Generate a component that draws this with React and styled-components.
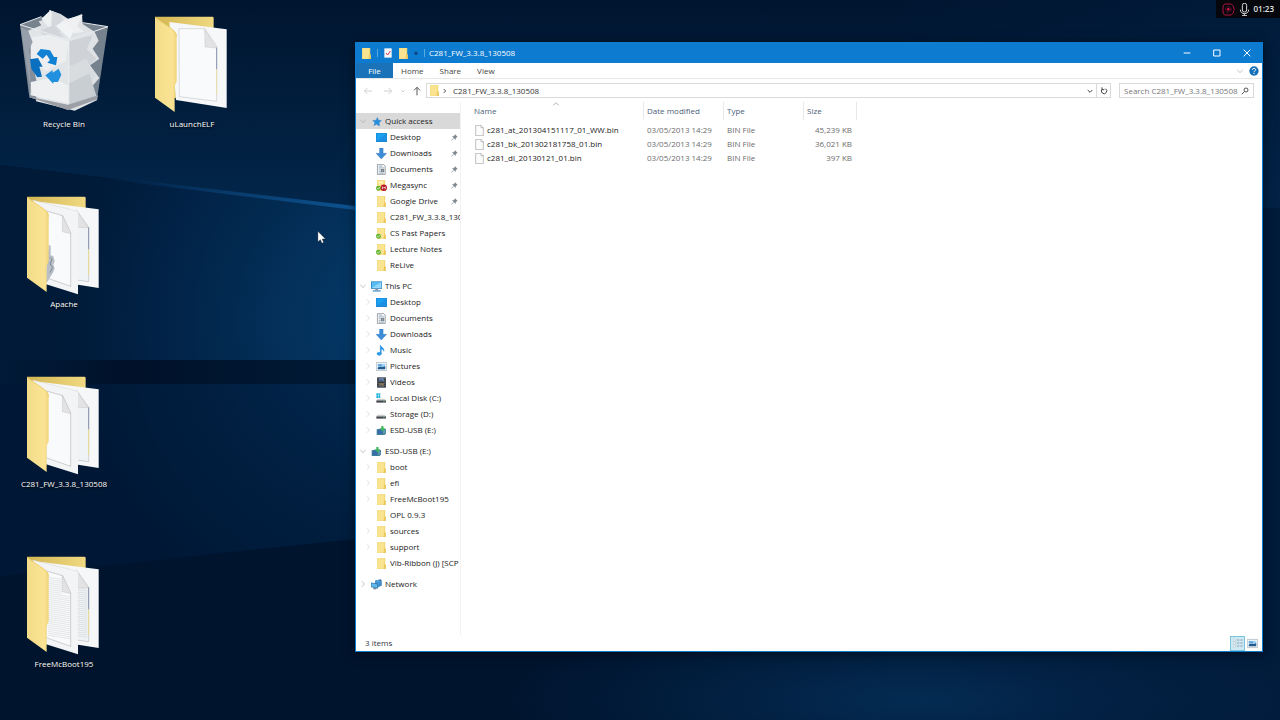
import React from "react";
import styled, { createGlobalStyle } from "styled-components";

const quickAccess = [
    { name: "Desktop", icon: "desktop", pinned: true },
    { name: "Downloads", icon: "downloads", pinned: true },
    { name: "Documents", icon: "documents", pinned: true },
    { name: "Megasync", icon: "mega", pinned: true },
    { name: "Google Drive", icon: "folder", pinned: true },
    { name: "C281_FW_3.3.8_130508", icon: "folder" },
    { name: "CS Past Papers", icon: "synced" },
    { name: "Lecture Notes", icon: "synced" },
    { name: "ReLive", icon: "folder" },
];

const thisPc = [
    { name: "Desktop", icon: "desktop", arrow: true },
    { name: "Documents", icon: "documents", arrow: true },
    { name: "Downloads", icon: "downloads", arrow: true },
    { name: "Music", icon: "music", arrow: true },
    { name: "Pictures", icon: "pictures", arrow: true },
    { name: "Videos", icon: "videos", arrow: true },
    { name: "Local Disk (C:)", icon: "systemDisk", arrow: true },
    { name: "Storage (D:)", icon: "disk", arrow: true },
    { name: "ESD-USB (E:)", icon: "usb", arrow: true },
];

const usb = [
    { name: "boot", icon: "folder", arrow: true },
    { name: "efi", icon: "folder", arrow: true },
    { name: "FreeMcBoot195", icon: "folder", arrow: true },
    { name: "OPL 0.9.3", icon: "folder" },
    { name: "sources", icon: "folder", arrow: true },
    { name: "support", icon: "folder", arrow: true },
    { name: "Vib-Ribbon (J) [SCP", icon: "folder" },
];

const groups = [
    { name: "Quick access", icon: "star", open: true, active: true, items: quickAccess },
    { name: "This PC", icon: "pc", open: true, items: thisPc },
    { name: "ESD-USB (E:)", icon: "usb", open: true, items: usb },
    { name: "Network", icon: "network", items: [] },
];

const files = [
    { name: "c281_at_201304151117_01_WW.bin", date: "03/05/2013 14:29", type: "BIN File", size: "45,239 KB" },
    { name: "c281_bk_201302181758_01.bin", date: "03/05/2013 14:29", type: "BIN File", size: "36,021 KB" },
    { name: "c281_dl_20130121_01.bin", date: "03/05/2013 14:29", type: "BIN File", size: "397 KB" },
];

const shortcuts = [
    { name: "Recycle Bin", kind: "bin" },
    { name: "Apache", kind: "feather" },
    { name: "C281_FW_3.3.8_130508", kind: "plain" },
    { name: "FreeMcBoot195", kind: "lines" },
    { name: "uLaunchELF", kind: "single" },
];

/* ---------- drawings ---------- */

const FolderShape = () => (
    <>
        <path d="M3 0h23v18l2 2v11H3z" fill="#f3d672" />
        <path d="M4 1h19v29H4z" fill="#fbe491" />
        <path d="M23 18h4v12h-6z" fill="#e9c75a" />
    </>
);

const UsbShape = () => (
    <>
        <path d="M2 12l16-3 10 2v14l-4 3H2z" fill="#3f7f96" />
        <path d="M4 15h14v10H4z" fill="#3a6cb0" />
        <path d="M20 13l6-1v11l-6 3z" fill="#5f9bb0" />
        <path d="M11 10h4V3h6v7h5l-7 8z" fill="#3cb85a" />
    </>
);

const DiskShape = () => (
    <>
        <path d="M4 16h20l4 5H1z" fill="#c9cdd0" />
        <path d="M1 21h27v6H1z" fill="#3c4247" />
        <path d="M20 23h5v2h-5z" fill="#6fdc6a" />
    </>
);

const icons = {
    folder: <FolderShape />,
    synced: (
        <>
            <FolderShape />
            <circle cx="7" cy="23" r="7" fill="#63b22f" />
            <path d="M3 23l3 3 5-6" fill="none" stroke="#fff" strokeWidth="2" />
        </>
    ),
    mega: (
        <>
            <FolderShape />
            <path d="M7 5h12v4H7z" fill="#fff6cf" />
            <circle cx="7" cy="23" r="7" fill="#63b22f" />
            <path d="M3 23l3 3 5-6" fill="none" stroke="#fff" strokeWidth="2" />
            <circle cx="22" cy="22" r="9" fill="#b81a22" />
            <path d="M18 26v-7l4 4 4-4v7" fill="none" stroke="#fff" strokeWidth="2" />
        </>
    ),
    desktop: (
        <>
            <path d="M0 3h31v25H0z" fill="#1274c4" />
            <path d="M1 4h29v22H1z" fill="#1ba1f2" />
            <path d="M1 26L30 4v22z" fill="#1b8fe2" />
        </>
    ),
    downloads: <path d="M10 0h10v15h10L15 31 0 15h10z" fill="#3b8bd6" stroke="#2b73b8" />,
    documents: (
        <>
            <path d="M4 1h17l5 5v24H4z" fill="#f2f3f4" stroke="#7d858c" strokeWidth="2" />
            <path d="M8 6h9M8 11h14M8 16h5M8 21h5M8 26h14" stroke="#7e97ad" strokeWidth="2" />
            <path d="M14 14h9v9h-9z" fill="#6c7780" />
            <path d="M16 17h5M16 20h5" stroke="#fff" />
        </>
    ),
    music: (
        <>
            <path d="M12 0c2 7 13 8 10 18-1-5-4-7-7-7v14h-3V0z" fill="#1c86dc" stroke="#1c86dc" />
            <ellipse cx="9" cy="25" rx="7" ry="5" fill="#2f9be8" />
        </>
    ),
    pictures: (
        <>
            <path d="M1 4h29v23H1z" fill="#f5f8fa" stroke="#a9b4bd" strokeWidth="2" />
            <path d="M5 8h21v15H5z" fill="#9fd2f4" />
            <path d="M5 19c6-6 10 1 21-4v8H5z" fill="#24598e" />
            <path d="M5 10h12v3H5z" fill="#3c87c4" />
        </>
    ),
    videos: (
        <>
            <path d="M3 1h25v29H3z" fill="#30363f" />
            <path d="M9 3h13v11H9z" fill="#6f86b5" />
            <path d="M9 17h13v11H9z" fill="#8a7458" />
            <path d="M9 12l6-6 7 8H9zM9 26l5-5 8 7H9z" fill="#4a5a6a" />
            <path d="M6 3v26M25 3v26" stroke="#a9adb2" strokeWidth="2" strokeDasharray="2 3" />
        </>
    ),
    systemDisk: (
        <>
            <DiskShape />
            <path d="M1 1h5v6H1zM7 1h5v6H7zM1 8h5v6H1zM7 8h5v6H7z" fill="#20b4dc" />
        </>
    ),
    disk: <DiskShape />,
    usb: <UsbShape />,
    star: (
        <path
            d="M18 4l3 8 8 1-6 6 1 9-8-5-8 4 3-8-6-6 9-1z"
            fill="#2a8fdc"
            stroke="#1c76bf"
        />
    ),
    pc: (
        <>
            <path d="M0 1h31v21H0z" fill="#2c7fc0" />
            <path d="M2 3h27v17H2z" fill="#55bdf3" />
            <path d="M2 20L29 3v17z" fill="#8fd6fa" />
            <path d="M12 22h8v4h-8z" fill="#8b98a3" />
            <path d="M5 26h22v4H5z" fill="#5b9ac4" />
        </>
    ),
    network: (
        <>
            <path d="M12 4l15-3 3 3v15l-13 4-5-5z" fill="#2d6fa6" />
            <circle cx="20" cy="12" r="9" fill="#3b8fd0" />
            <path d="M13 8c5-5 11-3 14 0M20 3v18" stroke="#9fd3f5" fill="none" />
            <path d="M0 11l19 3v12L0 22z" fill="#5fb8ea" stroke="#27699f" strokeWidth="2" />
            <path d="M6 26h9v3H6z" fill="#55728a" />
        </>
    ),
};

const Icon = ({ name }) => (
    <IconSvg viewBox="0 0 31 31" aria-hidden="true">
        {icons[name]}
    </IconSvg>
);

const Chevron = ({ open }) => (
    <ChevronSvg viewBox="0 0 24 24" aria-hidden="true">
        <path d={open ? "M4 8l8 9 8-9" : "M9 4l7 8-7 8"} />
    </ChevronSvg>
);

const Pin = () => (
    <PinSvg viewBox="0 0 21 21" aria-hidden="true">
        <path d="M12 1l8 8-3 1-3 4v4l-5-5-7 7-1-1 7-7-5-5h4l4-3z" />
    </PinSvg>
);

const PageFold = ({ d }) => <path d={d} fill="#e3e3e5" stroke="#b9b6ac" />;

const TextLines = ({ x, y, width, count, slope }) => (
    <g stroke="#b9bcc0">
        {Array.from({ length: count }, (_, i) => (
            <path key={i} d={`M${x} ${y + i * 6}l${width} ${slope}`} />
        ))}
    </g>
);

const BigFolder = ({ kind }) => (
    <BigSvg viewBox="48 30 288 312" aria-hidden="true">
        <defs>
            <linearGradient id={`flap-${kind}`} x1="0" x2="1">
                <stop offset="0" stopColor="#f3dc88" />
                <stop offset="0.8" stopColor="#fae394" />
                <stop offset="1" stopColor="#f0d47a" />
            </linearGradient>
            <linearGradient id={`back-${kind}`} x1="0" x2="1">
                <stop offset="0" stopColor="#d3b653" />
                <stop offset="1" stopColor="#f0d982" />
            </linearGradient>
        </defs>
        <path d="M81 50h172q4 0 4 4v240H81z" fill={`url(#back-${kind})`} />
        <path d="M124 66l172 22v236l-152-24z" fill="#f6f7f8" />
        {kind === "single" ? (
            <>
                <path d="M153 86h77l36 52v166l-112-14z" fill="#f9fafc" stroke="#9a9b9f" strokeWidth="1" />
                <path d="M266 142v66" stroke="#5d6f95" strokeWidth="2" />
                <path d="M266 208v76" stroke="#efe08a" strokeWidth="2" />
                <PageFold d="M230 88l1 53 35 3z" />
            </>
        ) : (
            <>
                <path d="M230 92l36 50v163l-36-5z" fill="#f0f3f5" stroke="#85878c" strokeWidth="1" />
                {kind === "lines" && <TextLines x={234} y={145} width={28} count={25} slope={2} />}
                <path d="M266 142v66" stroke="#5d6f95" strokeWidth="2" />
                <path d="M266 208v76" stroke="#f0dc6a" strokeWidth="2" />
                <PageFold d="M232 94v48l33 1z" />
                <path d="M98 60l136 34v249L136 312z" fill="#f3f4f5" />
                <path d="M98 60l136 34" stroke="#c9c6bb" />
                <path d="M140 93l48 14 24 52v160l-74-26z" fill="#f9fafb" stroke="#7c7d80" strokeWidth="1" />
                {kind === "lines" && <TextLines x={144} y={112} width={42} count={8} slope={6} />}
                {kind === "lines" && <TextLines x={144} y={160} width={66} count={22} slope={10} />}
                {kind === "feather" && (
                    <>
                        <path d="M146 194l6 4v28l8 2 4 16-4 10 4 12-6 14-8 12-8 14h-6z" fill="#b9bfc7" />
                        <path d="M150 232l6 6-6 14 8 10-8 16" fill="none" stroke="#7d8690" strokeWidth="3" />
                    </>
                )}
                <PageFold d="M187 107v48l26 6z" />
            </>
        )}
        <path
            d="M81 52l52 36q13 9 13 22v134l-6 14v78l-59-43z"
            fill={`url(#flap-${kind})`}
        />
        <path d="M81 52l52 36q13 9 13 22" fill="none" stroke="#e3c25c" strokeWidth="2" />
    </BigSvg>
);

const RecycleBin = () => (
    <BigSvg viewBox="48 30 288 312" aria-hidden="true">
        <path d="M60 74l64-24 200 30-32 212-88 38-116-38z" fill="#77828f" />
        <path d="M84 92l40-16-8-12 28-8 4-26 34 12 24 16 40-16 2 30 36 24 12 26-18 24 20 30-28 20 28 38-26 30 20 36-68 32-116-28 4-50-8-36 8-32-14-34z" fill="#dfe2e5" />
        <path d="M124 56l28-26 16 40-14 22zM190 60l58-16-16 34 20 18-34 4z" fill="#eef0f2" />
        <path d="M156 32l28 14 10 36-22 22-18-30z" fill="#d5d9dd" />
        <path d="M118 92l40-16 34 36-60-4z" fill="#d2d6da" />
        <path d="M168 78l22-16 30 30-10 26z" fill="#f2f3f5" />
        <path d="M92 112l54-8 60 20-8 60-60 30-46-30z" fill="#eaecee" />
        <path d="M208 124l70-18-18 42 30 28-50 40-32-22z" fill="#cfd3d8" />
        <path d="M208 200l50-24 30 50-36 42-44 28z" fill="#d9dcdf" />
        <path d="M208 250l60-30 22 70-82 28z" fill="#c9ced3" />
        <path d="M92 246l64-12 48 22v54l-112-24z" fill="#edeff1" />
        <path d="M62 82l22 10 14 34-12 24 8 32-4 34 4 66z" fill="#8b95a1" />
        <path d="M206 120v200" stroke="#f2f3f5" strokeOpacity="0.5" strokeWidth="4" />
        <path d="M60 74l146 46-2 208-116-38z" fill="#fff" fillOpacity="0.1" />
        <path d="M88 290l116 24 90-28-2 12-88 32-116-38z" fill="#9c9fa6" />
        <path d="M124 50L60 74l146 46 118-40-76-12" fill="none" stroke="#e9edf0" strokeWidth="3" />
        <path d="M110 162l12-15 28 4 12 20 10 0-4 25-26-8 8-8-10-16-12 12z" fill="#1181d4" />
        <path d="M90 178l24-4 14 26-10 0 8 30-14 2-18-26z" fill="#0b6fc0" />
        <path d="M136 226l22-16 0 8 18-12 8 18-10 22-14 0v6z" fill="#2191df" />
    </BigSvg>
);

const Wallpaper = () => (
    <WallpaperSvg viewBox="0 0 1280 720" preserveAspectRatio="none" aria-hidden="true">
        <defs>
            <radialGradient id="glow" gradientUnits="userSpaceOnUse" cx="400" cy="320" r="400">
                <stop offset="0" stopColor="#053c6c" />
                <stop offset="0.3" stopColor="#043460" stopOpacity="0.85" />
                <stop offset="0.65" stopColor="#02264c" stopOpacity="0.6" />
                <stop offset="1" stopColor="#00152f" stopOpacity="0" />
            </radialGradient>
            <radialGradient id="floor" gradientUnits="userSpaceOnUse" cx="930" cy="700" r="420" gradientTransform="matrix(1 0 0 0.22 0 546)">
                <stop offset="0" stopColor="#042c54" />
                <stop offset="1" stopColor="#042c54" stopOpacity="0" />
            </radialGradient>
            <linearGradient id="beam" x1="0" x2="1">
                <stop offset="0.3" stopColor="#0d4f8c" stopOpacity="0" />
                <stop offset="1" stopColor="#0e5391" />
            </linearGradient>
            <linearGradient id="bar" x1="0" x2="1">
                <stop offset="0" stopColor="#001129" stopOpacity="0" />
                <stop offset="0.35" stopColor="#001129" />
                <stop offset="1" stopColor="#001a35" />
            </linearGradient>
            <linearGradient id="upper" x1="0" x2="0" y1="0" y2="1">
                <stop offset="0" stopColor="#00152f" />
                <stop offset="1" stopColor="#02264a" />
            </linearGradient>
            <linearGradient id="side" x1="0" x2="1">
                <stop offset="0" stopColor="#021f42" stopOpacity="0" />
                <stop offset="1" stopColor="#021f42" stopOpacity="0.6" />
            </linearGradient>
        </defs>
        <path d="M0 0h1280v720H0z" fill="#00142e" />
        <path d="M0 0h1280v208H355L0 165z" fill="url(#upper)" />
        <path d="M0 165l355 43v331L0 576z" fill="#001a38" />
        <path d="M0 165l355 43v331L0 576z" fill="url(#glow)" />
        <path d="M0 384h355v155L110 567 0 576z" fill="#001733" fillOpacity="0.45" />
        <path d="M0 164l355 42v4L0 166z" fill="url(#beam)" />
        <path d="M0 360h355v24H0z" fill="url(#bar)" />
        <path d="M0 600h1280v120H0z" fill="url(#floor)" />
        <path d="M900 0h380v720H900z" fill="url(#side)" />
    </WallpaperSvg>
);

/* ---------- parts ---------- */

function TitleBar() {
    return (
        <TitleRow>
            <TitleIcons>
                <Icon name="folder" />
                <Divider />
                <QuickButton aria-label="Properties">
                    <GlyphSvg viewBox="0 0 30 30">
                        <path d="M4 1h22v28H4z" fill="#f7f7f9" />
                        <path d="M9 15l5 6 8-12" fill="none" stroke="#d2384a" strokeWidth="3" />
                    </GlyphSvg>
                </QuickButton>
                <QuickButton aria-label="New folder">
                    <Icon name="folder" />
                </QuickButton>
                <QuickButton aria-label="Customise toolbar" $small>
                    <GlyphSvg viewBox="0 0 30 30">
                        <path d="M7 10h16M8 16h14l-7 8z" fill="#0c3156" stroke="#0c3156" strokeWidth="3" />
                    </GlyphSvg>
                </QuickButton>
                <Divider />
            </TitleIcons>
            <Title>C281_FW_3.3.8_130508</Title>
            <CaptionButton aria-label="Minimise">
                <GlyphSvg viewBox="0 0 30 30">
                    <path d="M5 15h20" stroke="#fff" strokeWidth="3" />
                </GlyphSvg>
            </CaptionButton>
            <CaptionButton aria-label="Maximise">
                <GlyphSvg viewBox="0 0 30 30">
                    <path d="M5 6h19v18H5z" fill="none" stroke="#fff" strokeWidth="3" />
                </GlyphSvg>
            </CaptionButton>
            <CaptionButton aria-label="Close">
                <GlyphSvg viewBox="0 0 30 30">
                    <path d="M5 5l20 20M25 5L5 25" stroke="#fff" strokeWidth="3" />
                </GlyphSvg>
            </CaptionButton>
        </TitleRow>
    );
}

function Ribbon() {
    return (
        <RibbonRow>
            <FileTab>File</FileTab>
            <Tab>Home</Tab>
            <Tab>Share</Tab>
            <Tab>View</Tab>
            <RibbonTools>
                <ToolButton $width={12} aria-label="Expand ribbon">
                    <Chevron open />
                </ToolButton>
                <ToolButton $width={12} aria-label="Help">
                    <GlyphSvg viewBox="0 0 30 30">
                        <circle cx="15" cy="15" r="14" fill="#1370b8" />
                        <path d="M10 12c0-7 10-6 10-1 0 4-5 3-5 8M15 21v3" fill="none" stroke="#fff" strokeWidth="3" />
                    </GlyphSvg>
                </ToolButton>
            </RibbonTools>
        </RibbonRow>
    );
}

function AddressBar() {
    return (
        <AddressRow>
            <NavButtons>
                <ToolButton $width={20} aria-label="Back">
                    <ArrowSvg viewBox="0 0 30 30" $color="#d0d0d0">
                        <path d="M27 15H4M13 6l-9 9 9 9" />
                    </ArrowSvg>
                </ToolButton>
                <ToolButton $width={20} aria-label="Forward">
                    <ArrowSvg viewBox="0 0 30 30" $color="#d0d0d0">
                        <path d="M3 15h23M17 6l9 9-9 9" />
                    </ArrowSvg>
                </ToolButton>
                <ToolButton $width={10} aria-label="Recent locations">
                    <ArrowSvg viewBox="0 0 30 30" $color="#d0d0d0">
                        <path d="M10 13l5 5 5-5" />
                    </ArrowSvg>
                </ToolButton>
                <ToolButton $width={18} aria-label="Up">
                    <ArrowSvg viewBox="0 0 30 30" $color="#555">
                        <path d="M15 28V4M6 13l9-9 9 9" />
                    </ArrowSvg>
                </ToolButton>
            </NavButtons>
            <AddressBox>
                <Icon name="folder" />
                <ArrowSvg viewBox="0 0 30 30" $color="#555">
                    <path d="M11 9l6 6-6 6" />
                </ArrowSvg>
                <Crumb href="#folder">C281_FW_3.3.8_130508</Crumb>
                <ToolButton $width={12} aria-label="Previous locations">
                    <ArrowSvg viewBox="0 0 30 30" $color="#444">
                        <path d="M8 12l7 7 7-7" />
                    </ArrowSvg>
                </ToolButton>
                <RefreshButton aria-label="Refresh">
                    <ArrowSvg viewBox="0 0 30 30" $color="#444">
                        <path d="M19 8a8 8 0 1 1-9 1M9 4v7h7" />
                    </ArrowSvg>
                </RefreshButton>
            </AddressBox>
            <SearchBox>
                <SearchInput aria-label="Search" placeholder="Search C281_FW_3.3.8_130508" />
                <ArrowSvg viewBox="0 0 30 30" $color="#555">
                    <circle cx="18" cy="12" r="6" />
                    <path d="M14 16l-9 9" />
                </ArrowSvg>
            </SearchBox>
        </AddressRow>
    );
}

function Sidebar() {
    return (
        <Nav aria-label="Folders">
            {groups.map((group) => (
                <Group key={group.name}>
                    <GroupItem $active={group.active}>
                        <Chevron open={group.open} />
                        <Icon name={group.icon} />
                        <ItemText>{group.name}</ItemText>
                    </GroupItem>
                    {group.items.map((item) => (
                        <ChildItem key={item.name} $pinned={item.pinned}>
                            <ArrowSlot>{item.arrow && <Chevron />}</ArrowSlot>
                            <Icon name={item.icon} />
                            <ItemText>{item.name}</ItemText>
                            {item.pinned && <Pin />}
                        </ChildItem>
                    ))}
                </Group>
            ))}
        </Nav>
    );
}

function FileList() {
    return (
        <ListPane>
            <Table>
                <colgroup>
                    <Col $width={183} />
                    <Col $width={80} />
                    <Col $width={80} />
                    <Col $width={53} />
                </colgroup>
                <thead>
                    <tr>
                        <Th $first>
                            Name
                            <SortMark viewBox="0 0 24 12" aria-hidden="true">
                                <path d="M4 10l8-8 8 8" />
                            </SortMark>
                        </Th>
                        <Th>Date modified</Th>
                        <Th>Type</Th>
                        <Th>Size</Th>
                    </tr>
                </thead>
                <Tbody>
                    {files.map((file) => (
                        <tr key={file.name}>
                            <Td>
                                <FileName>
                                    <FileSvg viewBox="0 0 27 33" aria-hidden="true">
                                        <path d="M2 1h16l7 7v24H2z" />
                                        <path d="M18 1v7h7" />
                                    </FileSvg>
                                    {file.name}
                                </FileName>
                            </Td>
                            <Td $muted>{file.date}</Td>
                            <Td $muted>{file.type}</Td>
                            <Td $muted $right>{file.size}</Td>
                        </tr>
                    ))}
                </Tbody>
            </Table>
        </ListPane>
    );
}

function StatusBar() {
    return (
        <StatusRow>
            <StatusText>3 items</StatusText>
            <ViewButton $active aria-label="Details view">
                <GlyphSvg viewBox="0 0 30 30">
                    <path d="M1 3h7v6H1zM1 12h7v6H1zM1 21h7v6H1z" fill="#fff" stroke="#8a9aa5" />
                    <path d="M12 6h7M22 6h7M12 15h7M22 15h7M12 24h7M22 24h7" stroke="#6c7c88" strokeWidth="2" />
                </GlyphSvg>
            </ViewButton>
            <ViewButton aria-label="Large icons view">
                <Icon name="pictures" />
            </ViewButton>
        </StatusRow>
    );
}

function App() {
    return (
        <>
            <GlobalStyle />
            <Desktop>
                <Wallpaper />
                <Shortcuts>
                    {shortcuts.map((item) => (
                        <Shortcut key={item.name}>
                            {item.kind === "bin" ? <RecycleBin /> : <BigFolder kind={item.kind} />}
                            <ShortcutLabel>{item.name}</ShortcutLabel>
                        </Shortcut>
                    ))}
                </Shortcuts>
                <Window>
                    <TitleBar />
                    <Ribbon />
                    <AddressBar />
                    <Content>
                        <Sidebar />
                        <FileList />
                    </Content>
                    <StatusBar />
                </Window>
                <Recorder>
                    <RecorderSvg viewBox="0 0 39 39" aria-hidden="true">
                        <path d="M8 3h20l7 8v6l3 2-3 3v6l-7 8H8l-5-6V9z" fill="none" stroke="#b3123f" strokeWidth="3" />
                        <circle cx="19" cy="19" r="8" fill="none" stroke="#b3123f" strokeWidth="2" strokeDasharray="8 3" />
                        <circle cx="19" cy="19" r="4" fill="#d3184c" />
                    </RecorderSvg>
                    <RecorderSvg viewBox="0 0 39 39" aria-hidden="true">
                        <rect x="13" y="1" width="13" height="26" rx="6" fill="none" stroke="#d8d8d8" strokeWidth="3" />
                        <path d="M7 20c0 16 25 16 25 0M19 32v6M12 38h15" fill="none" stroke="#d8d8d8" strokeWidth="3" />
                    </RecorderSvg>
                    <Time>01:23</Time>
                </Recorder>
                <Cursor viewBox="0 0 24 36" aria-hidden="true">
                    <path d="M2 1v29l7-6 4 10 5-2-4-10h9z" fill="#fff" stroke="#111" strokeWidth="1" />
                </Cursor>
            </Desktop>
        </>
    );
}

export default App;

/* ---------- styles ---------- */

const GlobalStyle = createGlobalStyle`
    * {
        box-sizing: border-box;
    }
    body {
        margin: 0;
        font-family: "Open Sans", "Noto Sans", sans-serif;
        font-size: 8px;
        line-height: 12px;
        color: #222;
    }
    button, input {
        font: inherit;
        color: inherit;
        background: none;
        border: 0;
        padding: 0;
        margin: 0;
    }
`;

const Desktop = styled.main`
    position: relative;
    min-height: 100vh;
    overflow: hidden;
    background: #00142e;
`;

const WallpaperSvg = styled.svg`
    position: absolute;
    inset: 0;
    width: 100%;
    height: 100%;
`;

const Shortcuts = styled.div`
    position: relative;
    display: grid;
    grid-auto-flow: column;
    grid-template-rows: repeat(4, 180px);
    grid-auto-columns: 128px;
`;

const Shortcut = styled.button`
    display: flex;
    flex-direction: column;
    align-items: center;
    gap: 4px;
    padding-top: 10px;
`;

const ShortcutLabel = styled.span`
    color: #fff;
    text-shadow: 0 1px 2px #000;
`;

const BigSvg = styled.svg`
    width: 96px;
    height: 104px;
    overflow: visible;
`;

const Window = styled.section`
    position: absolute;
    top: 42px;
    right: 17px;
    bottom: 68px;
    left: 355px;
    display: flex;
    flex-direction: column;
    background: #fff;
    border: 1px solid #0f7ccd;
    box-shadow: 0 2px 10px rgba(0, 0, 0, 0.5);
`;

const TitleRow = styled.header`
    display: flex;
    height: 20px;
    background: #0d7bd0;
    color: #fff;
`;

const TitleIcons = styled.div`
    display: flex;
    align-items: center;
    gap: 5px;
    padding: 0 4px 0 5px;
`;

const Divider = styled.span`
    width: 1px;
    height: 8px;
    background: #5ba7e0;
`;

const QuickButton = styled.button`
    display: flex;
    width: ${(props) => (props.$small ? "6px" : "10px")};
`;

const Title = styled.span`
    flex: 1;
    line-height: 20px;
`;

const CaptionButton = styled.button`
    display: flex;
    align-items: center;
    justify-content: center;
    width: 30px;
`;

const GlyphSvg = styled.svg`
    display: block;
    width: 10px;
    height: 10px;
    max-width: 100%;
`;

const IconSvg = styled.svg`
    flex: none;
    width: 11px;
    height: 11px;
`;

const ChevronSvg = styled.svg`
    flex: none;
    width: 8px;
    height: 8px;
    fill: none;
    stroke: #a6a6a6;
    stroke-width: 2;
`;

const PinSvg = styled.svg`
    flex: none;
    width: 7px;
    height: 7px;
    fill: #808890;
`;

const ArrowSvg = styled.svg`
    flex: none;
    width: 10px;
    height: 10px;
    fill: none;
    stroke: ${(props) => props.$color};
    stroke-width: 3;
`;

const RibbonRow = styled.div`
    display: flex;
    height: 16px;
    border-bottom: 1px solid #e6e7e8;
`;

const Tab = styled.button`
    padding: 0 8px;
    color: #444;
`;

const FileTab = styled(Tab)`
    width: 37px;
    background: #1a72b9;
    color: #fff;
`;

const RibbonTools = styled.div`
    display: flex;
    gap: 2px;
    margin-left: auto;
    padding-right: 2px;
`;

const ToolButton = styled.button`
    display: flex;
    align-items: center;
    justify-content: center;
    width: ${(props) => props.$width}px;
`;

const AddressRow = styled.div`
    display: flex;
    gap: 8px;
    height: 23px;
    padding: 4px 8px 4px 2px;
`;

const NavButtons = styled.div`
    display: flex;
    margin-right: -8px;
`;

const AddressBox = styled.div`
    display: flex;
    flex: 1;
    align-items: center;
    padding-left: 2px;
    border: 1px solid #d9d9d9;
`;

const Crumb = styled.a`
    flex: 1;
    padding-left: 3px;
    line-height: 13px;
    color: #333;
    text-decoration: none;
`;

const RefreshButton = styled.button`
    display: flex;
    align-self: stretch;
    align-items: center;
    justify-content: center;
    width: 14px;
    border-left: 1px solid #d9d9d9;
`;

const SearchBox = styled.label`
    display: flex;
    align-items: center;
    width: 135px;
    padding: 0 3px 0 4px;
    border: 1px solid #d9d9d9;
`;

const SearchInput = styled.input`
    flex: 1;
    min-width: 0;
    outline: none;

    &::placeholder {
        color: #767676;
        opacity: 1;
    }
`;

const Content = styled.div`
    display: flex;
    flex: 1;
    min-height: 0;
`;

const Nav = styled.nav`
    display: flex;
    flex: none;
    flex-direction: column;
    gap: 5px;
    width: 105px;
    padding-top: 11px;
    border-right: 1px solid #f2f2f2;
    overflow: hidden;
`;

const Group = styled.div`
    display: flex;
    flex-direction: column;
`;

const GroupItem = styled.button`
    display: flex;
    align-items: center;
    gap: 2px;
    height: 16px;
    padding-left: 3px;
    text-align: left;
    background: ${(props) => (props.$active ? "#d9d9d9" : "none")};

    ${IconSvg} {
        margin: 0 1px 0 2px;
    }
`;

const ChildItem = styled.button`
    display: flex;
    align-items: center;
    gap: 2px;
    height: 16px;
    padding: 0 ${(props) => (props.$pinned ? "2px" : "0")} 0 8px;
    text-align: left;

    ${IconSvg} {
        margin: 0 1px 0 2px;
    }
`;

const ArrowSlot = styled.span`
    display: flex;
    width: 8px;

    ${ChevronSvg} {
        stroke: #d0d0d0;
    }
`;

const ItemText = styled.span`
    flex: 1;
    overflow: hidden;
    white-space: nowrap;
`;

const ListPane = styled.div`
    flex: 1;
    overflow: hidden;
`;

const Table = styled.table`
    table-layout: fixed;
    width: 396px;
    border-collapse: separate;
    border-spacing: 0;
`;

const Col = styled.col`
    width: ${(props) => props.$width}px;
`;

const Th = styled.th`
    position: relative;
    height: 18px;
    padding: 0 0 0 ${(props) => (props.$first ? "13px" : "3px")};
    border-right: 1px solid #e8e8e8;
    color: #4c607a;
    font-weight: 400;
    text-align: left;
`;

const SortMark = styled.svg`
    position: absolute;
    top: 0;
    left: 50%;
    width: 8px;
    height: 4px;
    fill: none;
    stroke: #8a8a8a;
    stroke-width: 2;
`;

const Tbody = styled.tbody`
    &::before {
        content: "";
        display: table-row;
        height: 3px;
    }
`;

const Td = styled.td`
    height: 14px;
    padding: 0 5px 0 3px;
    color: ${(props) => (props.$muted ? "#6d6d6d" : "#222")};
    text-align: ${(props) => (props.$right ? "right" : "left")};
    white-space: nowrap;
`;

const FileName = styled.div`
    display: flex;
    align-items: center;
    gap: 3px;
    padding-left: 11px;
`;

const FileSvg = styled.svg`
    width: 9px;
    height: 11px;
    fill: #fcfcfc;
    stroke: #a0a0a0;
    stroke-width: 2;
`;

const StatusRow = styled.footer`
    display: flex;
    align-items: center;
    height: 16px;
    padding: 0 2px 0 9px;
`;

const StatusText = styled.span`
    flex: 1;
    color: #334;
`;

const ViewButton = styled.button`
    display: flex;
    align-items: center;
    justify-content: center;
    width: 15px;
    height: 15px;
    border: 1px solid ${(props) => (props.$active ? "#7cc4dc" : "transparent")};
    background: ${(props) => (props.$active ? "#cdeaf4" : "none")};
`;

const Recorder = styled.aside`
    position: absolute;
    top: 0;
    right: 0;
    display: flex;
    align-items: center;
    gap: 3px;
    height: 18px;
    padding: 0 6px;
    background: #05070d;
    color: #e4e4e4;
`;

const RecorderSvg = styled.svg`
    width: 13px;
    height: 13px;
`;

const Time = styled.span`
    font-weight: 600;
`;

const Cursor = styled.svg`
    position: absolute;
    top: 231px;
    left: 317px;
    width: 9px;
    height: 13px;
`;
